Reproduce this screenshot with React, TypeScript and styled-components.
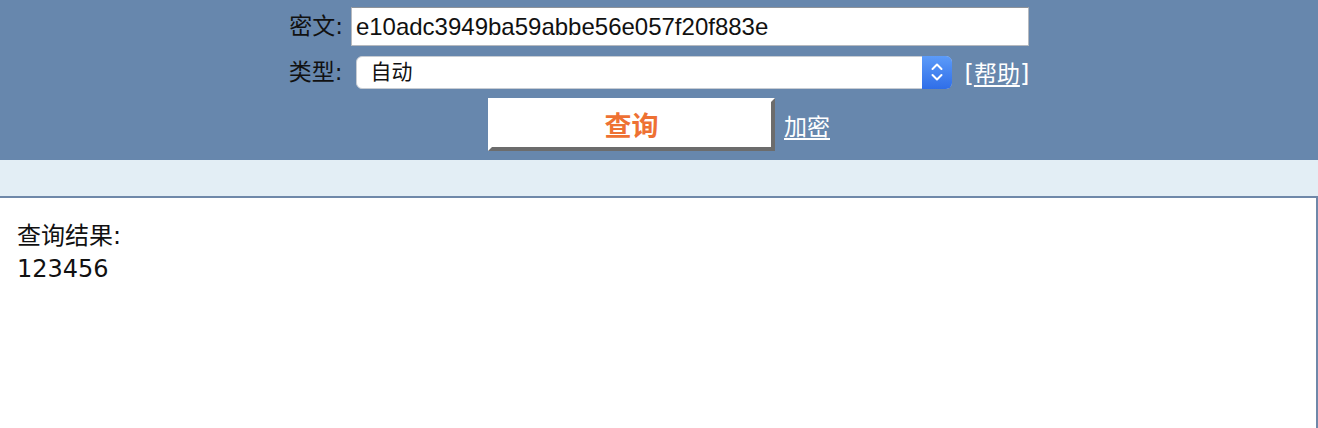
import React, { FC, useState } from "react";
import styled, { createGlobalStyle } from "styled-components";

const GlobalStyle = createGlobalStyle`
    body {
        margin: 0;
        background: #ffffff;
        font-family: "DejaVu Sans", "Noto Sans CJK SC", sans-serif;
        color: #111111;
    }
`;

const colors = {
    band: "#6787ad",
    strip: "#e3eef5",
    frame: "#6f88a9",
    orange: "#ee7133",
};

export default function App() {
    const [cipher, setCipher] = useState("e10adc3949ba59abbe56e057f20f883e");
    const [kind, setKind] = useState("auto");

    return (
        <>
            <GlobalStyle />
            <Header>
                <FormRow $gap={8}>
                    <Label>密文:</Label>
                    <CipherInput
                        value={cipher}
                        onChange={(e) => setCipher(e.target.value)}
                    />
                </FormRow>
                <FormRow $gap={13}>
                    <Label>类型:</Label>
                    <SelectBox>
                        <KindSelect
                            value={kind}
                            onChange={(e) => setKind(e.target.value)}
                        >
                            <option value="auto">自动</option>
                            <option value="md5">md5</option>
                            <option value="sha1">sha1</option>
                        </KindSelect>
                        <SelectArrows />
                    </SelectBox>
                    <HelpLink href="#">
                        [<u>帮助</u>]
                    </HelpLink>
                </FormRow>
                <FormRow $gap={9}>
                    <QueryButton type="button">查询</QueryButton>
                    <TextLink href="#">加密</TextLink>
                </FormRow>
            </Header>
            <Strip />
            <ResultPanel>
                <ResultLine>查询结果:</ResultLine>
                <ResultLine>123456</ResultLine>
            </ResultPanel>
        </>
    );
}

const SelectArrows: FC = () => (
    <ArrowBox>
        <svg width="14" height="22" viewBox="0 0 14 22" fill="none">
            <path
                d="M2.5 8 L7 3.5 L11.5 8"
                stroke="#ffffff"
                strokeWidth="2"
                strokeLinecap="round"
                strokeLinejoin="round"
            />
            <path
                d="M2.5 14 L7 18.5 L11.5 14"
                stroke="#ffffff"
                strokeWidth="2"
                strokeLinecap="round"
                strokeLinejoin="round"
            />
        </svg>
    </ArrowBox>
);

const Header = styled.div`
    background: ${colors.band};
    height: 160px;
    box-sizing: border-box;
    padding-top: 7px;
    display: flex;
    flex-direction: column;
    gap: 9px;
`;

const FormRow = styled.div<{ $gap: number }>`
    display: flex;
    justify-content: center;
    align-items: center;
    gap: ${(p) => p.$gap}px;
`;

const Label = styled.span`
    font-size: 23px;
    color: #111111;
    line-height: 1;
`;

const CipherInput = styled.input`
    width: 678px;
    height: 39px;
    box-sizing: border-box;
    margin: 0;
    padding: 0 4px;
    border: 1px solid #b5b9bf;
    border-top-color: #8e939a;
    background: #ffffff;
    font-family: "Liberation Sans", Arial, sans-serif;
    font-size: 24px;
    color: #111111;
    outline: none;
`;

const SelectBox = styled.div`
    position: relative;
    width: 596px;
    height: 33px;
`;

const KindSelect = styled.select`
    appearance: none;
    width: 100%;
    height: 100%;
    box-sizing: border-box;
    margin: 0;
    padding: 0 0 0 14px;
    border: 1px solid #c7ccd3;
    border-radius: 6px;
    background: #ffffff;
    font-family: "DejaVu Sans", "Noto Sans CJK SC", sans-serif;
    font-size: 21px;
    color: #111111;
    outline: none;
`;

const ArrowBox = styled.span`
    position: absolute;
    top: 0;
    right: 0;
    width: 30px;
    height: 33px;
    border-radius: 0 6px 6px 0;
    background: linear-gradient(#5c9bf9, #2f6ee8);
    display: flex;
    align-items: center;
    justify-content: center;
    pointer-events: none;
`;

const TextLink = styled.a`
    font-size: 23px;
    color: #ffffff;
    text-decoration: underline;
    text-underline-offset: 3px;
`;

const HelpLink = styled(TextLink)`
    text-decoration: none;
    font-size: 24px;
    u {
        text-decoration: underline;
        text-underline-offset: 3px;
        font-size: 23px;
    }
`;

const QueryButton = styled.button`
    width: 287px;
    height: 53px;
    box-sizing: border-box;
    margin: 0;
    padding: 0;
    border-style: solid;
    border-width: 4px;
    border-color: #ffffff #6c6c6c #6c6c6c #ffffff;
    background: #ffffff;
    font-family: "DejaVu Sans", "Noto Sans CJK SC", sans-serif;
    font-size: 27px;
    font-weight: bold;
    color: ${colors.orange};
    cursor: pointer;
`;

const Strip = styled.div`
    height: 36px;
    background: ${colors.strip};
`;

const ResultPanel = styled.div`
    height: 232px;
    box-sizing: border-box;
    border-top: 2px solid ${colors.frame};
    border-right: 2px solid ${colors.frame};
    padding: 22px 17px;
`;

const ResultLine = styled.div`
    font-size: 24px;
    line-height: 33px;
    color: #111111;
`;
